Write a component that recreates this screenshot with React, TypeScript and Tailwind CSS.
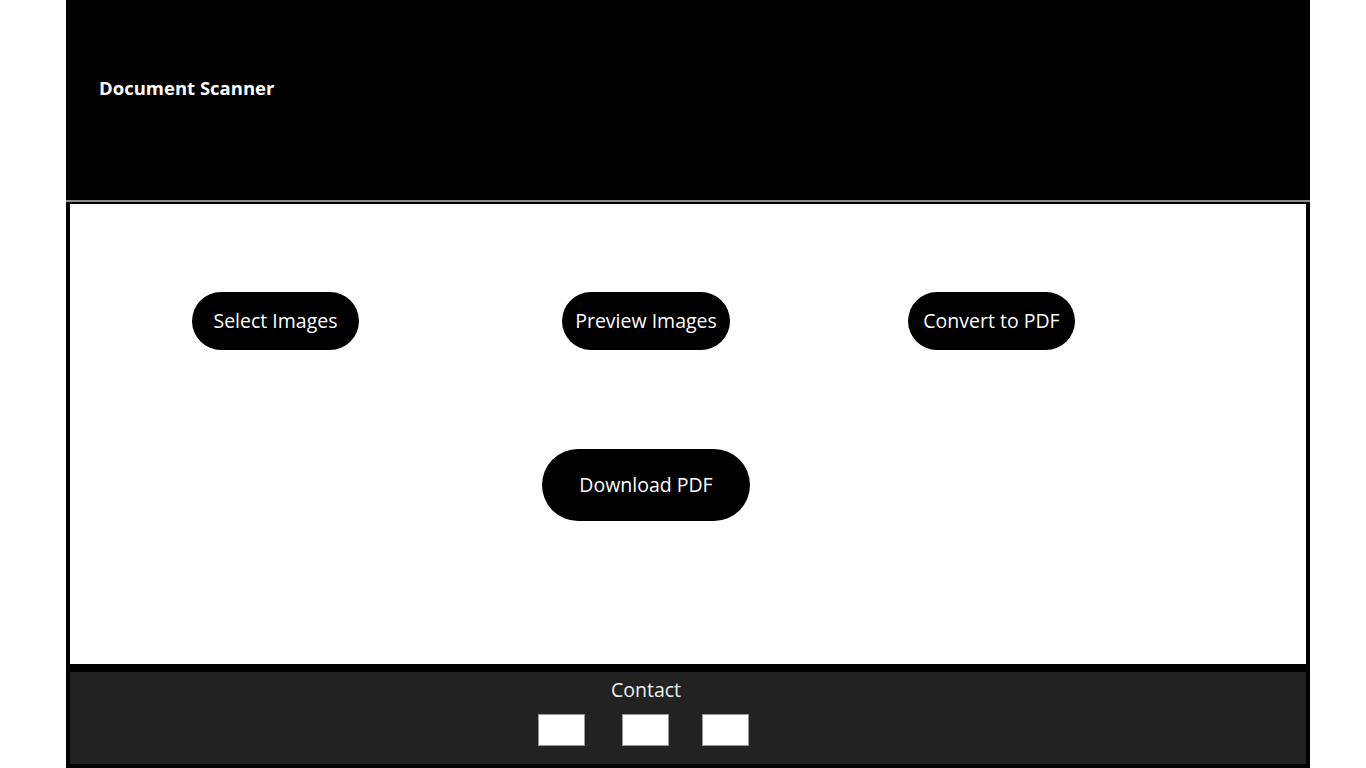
export default function App() {
  return (
    <div className="min-h-screen bg-white" style={{ fontFamily: '"Open Sans", "Noto Sans", sans-serif' }}>
      <div className="ml-[66px] w-[1244px]">
        {/* Header */}
        <header className="h-[200px] bg-black flex items-center px-[33px] pb-[24px]">
          <h1 className="text-[18.5px] font-bold text-white">Document Scanner</h1>
        </header>
        <div className="h-[2px] bg-[#8c8c8c]" />

        {/* Main */}
        <main className="h-[462px] border-x-4 border-t-2 border-black bg-white">
          <div className="flex pt-[88px] pl-[122px]">
            <button className="h-[58px] w-[167px] rounded-full bg-black text-[19.5px] text-white">Select Images</button>
            <button className="ml-[203px] h-[58px] w-[168px] rounded-full bg-black text-[19.5px] text-white">Preview Images</button>
            <button className="ml-[178px] h-[58px] w-[167px] rounded-full bg-black text-[19.5px] text-white">Convert to PDF</button>
          </div>
          <div className="flex pt-[99px] pl-[472px]">
            <button className="h-[72px] w-[208px] rounded-full bg-black text-[19.5px] text-white">Download PDF</button>
          </div>
        </main>

        {/* Footer */}
        <footer className="h-[104px] border-x-4 border-t-8 border-b-4 border-black bg-[#222222]">
          <div className="flex flex-col items-center">
            <p className="mt-[5px] mr-[84px] text-[19.5px] leading-[26px] text-[#f0f0f0]">Contact</p>
            <div className="mt-[11px] mr-[90px] flex">
              <div className="h-[32px] w-[47px] border border-[#999] bg-white" />
              <div className="ml-[37px] h-[32px] w-[47px] border border-[#999] bg-white" />
              <div className="ml-[33px] h-[32px] w-[47px] border border-[#999] bg-white" />
            </div>
          </div>
        </footer>
      </div>
    </div>
  )
}
